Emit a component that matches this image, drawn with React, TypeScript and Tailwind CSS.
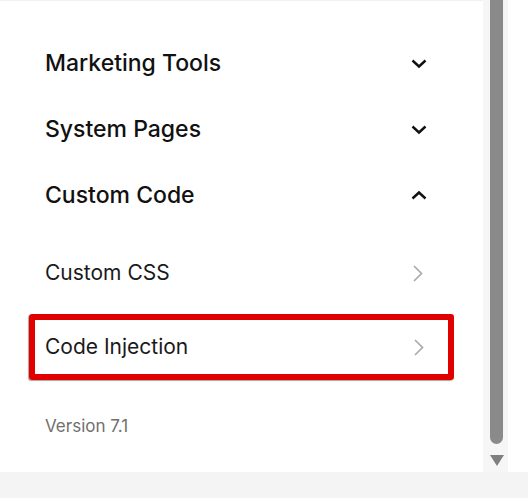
import React from "react";

function ChevronDown({ up = false }: { up?: boolean }) {
  return (
    <svg width="16" height="11" viewBox="0 0 16 11" className={up ? "rotate-180" : ""}>
      <path d="M1.5 2.5 L8 8.5 L14.5 2.5" fill="none" stroke="#111" strokeWidth="2.4" />
    </svg>
  );
}

function ChevronRight() {
  return (
    <svg width="10" height="17" viewBox="0 0 10 17">
      <path d="M1 1 L8.5 8.5 L1 16" fill="none" stroke="#ababab" strokeWidth="1.7" />
    </svg>
  );
}

const sections = [
  { label: "Marketing Tools", open: false },
  { label: "System Pages", open: false },
  { label: "Custom Code", open: true },
];

export default function App() {
  return (
    <div className="w-[528px] h-[498px] flex flex-col bg-white font-['Inter',sans-serif] overflow-hidden">
      <div className="flex flex-1 min-h-0">
        {/* Settings panel */}
        <div className="w-[483px] border-t border-[#f1f1f1] pt-[29px]">
          {sections.map((s) => (
            <div key={s.label} className="h-[66px] flex items-center justify-between pl-[45px] pr-[56px]">
              <span className="text-[23px] leading-[28px] font-medium text-[#111]">{s.label}</span>
              <ChevronDown up={s.open} />
            </div>
          ))}

          <div className="mt-[12px] h-[66px] flex items-center justify-between pl-[45px] pr-[60px]">
            <span className="text-[21px] leading-[26px] text-[#1a1a1a]">Custom CSS</span>
            <ChevronRight />
          </div>

          <div className="mt-[8px] ml-[29px] w-[425px] h-[66px] flex items-center justify-between border-[6px] border-[#e00000] rounded-[3px] shadow-[-1px_1px_1px_rgba(0,0,0,0.35)] pl-[10px] pr-[24px]">
            <span className="text-[21px] leading-[26px] text-[#1a1a1a]">Code Injection</span>
            <ChevronRight />
          </div>

          <div className="mt-[36px] pl-[45px] text-[17px] leading-[20px] text-[#707070]">Version 7.1</div>
        </div>

        {/* Scrollbar */}
        <div className="w-[25px] bg-[#f6f6f6] flex flex-col items-center pl-[2px]">
          <div className="w-[13px] h-[444px] bg-[#8a8a8a] rounded-b-full" />
          <div className="mt-[11px] w-0 h-0 border-l-[7px] border-r-[7px] border-t-[11px] border-l-transparent border-r-transparent border-t-[#7f7f7f]" />
        </div>
        <div className="flex-1 bg-white" />
      </div>
      <div className="h-[26px] bg-[#f4f4f4]" />
    </div>
  );
}
